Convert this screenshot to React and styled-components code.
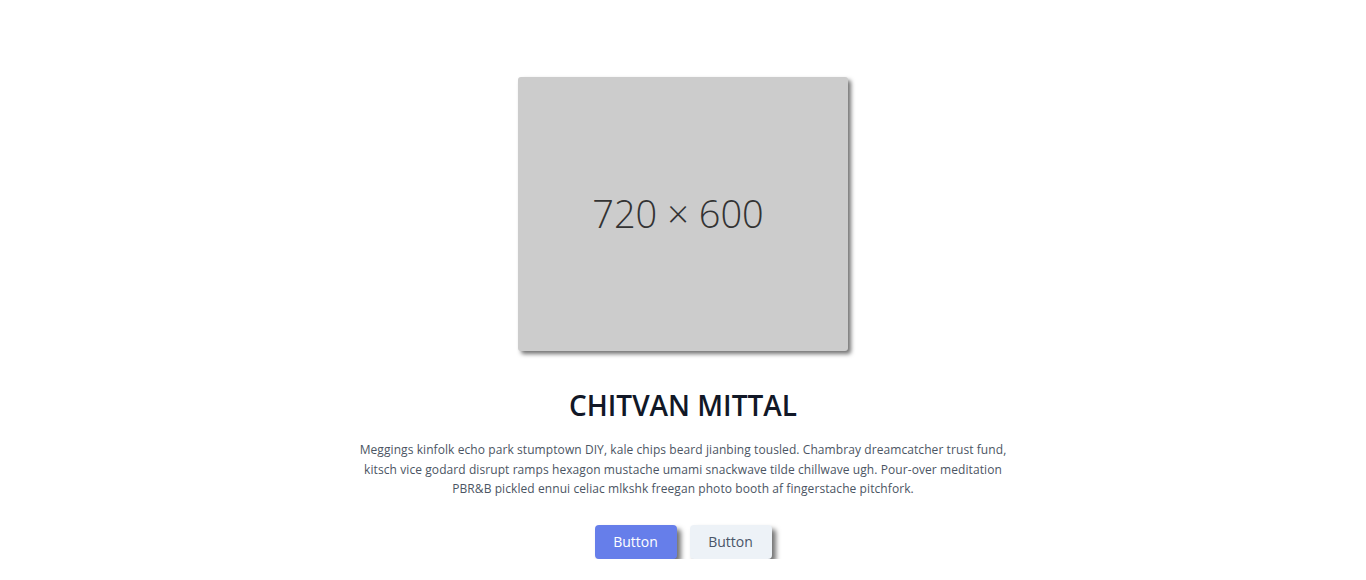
import React from "react";
import styled, { createGlobalStyle } from "styled-components";

const Global = createGlobalStyle`
  body {
    margin: 0;
    background: #ffffff;
    font-family: "Open Sans", "Noto Sans", sans-serif;
  }
`;

const Section = styled.section`
  display: flex;
  flex-direction: column;
  align-items: center;
  padding-top: 77px;
  color: #4b5563;
`;

const Placeholder = styled.div`
  width: 330px;
  height: 274px;
  background: #cccccc;
  border-radius: 3px;
  box-shadow: 3px 3px 4px rgba(0, 0, 0, 0.55);
  display: flex;
  align-items: center;
  justify-content: center;
  padding: 0 10px 3px 0;
  box-sizing: border-box;
  font-family: "Open Sans", sans-serif;
  font-weight: 300;
  font-size: 38px;
  color: #333333;
`;

const Title = styled.h1`
  margin: 36px 0 0;
  font-size: 28px;
  line-height: 36px;
  font-weight: 600;
  color: #111827;
`;

const Text = styled.p`
  margin: 17px 0 0;
  width: 660px;
  text-align: center;
  font-size: 12px;
  letter-spacing: 0.08px;
  line-height: 19.5px;
  color: #4b5563;
`;

const Buttons = styled.div`
  display: flex;
  gap: 13px;
  margin-top: 26px;
`;

const Button = styled.button`
  width: 82px;
  height: 34px;
  border: none;
  border-radius: 4px;
  font-family: inherit;
  font-size: 14px;
  background: ${(p) => (p.$primary ? "#667eea" : "#edf2f7")};
  color: ${(p) => (p.$primary ? "#ffffff" : "#4a5568")};
  box-shadow: 4px 4px 5px rgba(0, 0, 0, 0.55);
  cursor: pointer;
`;

export default function App() {
  return (
    <>
      <Global />
      <Section>
        <Placeholder>720 × 600</Placeholder>
        <Title>CHITVAN MITTAL</Title>
        <Text>
          Meggings kinfolk echo park stumptown DIY, kale chips beard jianbing
          tousled. Chambray dreamcatcher trust fund, kitsch vice godard disrupt
          ramps hexagon mustache umami snackwave tilde chillwave ugh. Pour-over
          meditation PBR&amp;B pickled ennui celiac mlkshk freegan photo booth
          af fingerstache pitchfork.
        </Text>
        <Buttons>
          <Button $primary>Button</Button>
          <Button>Button</Button>
        </Buttons>
      </Section>
    </>
  );
}
